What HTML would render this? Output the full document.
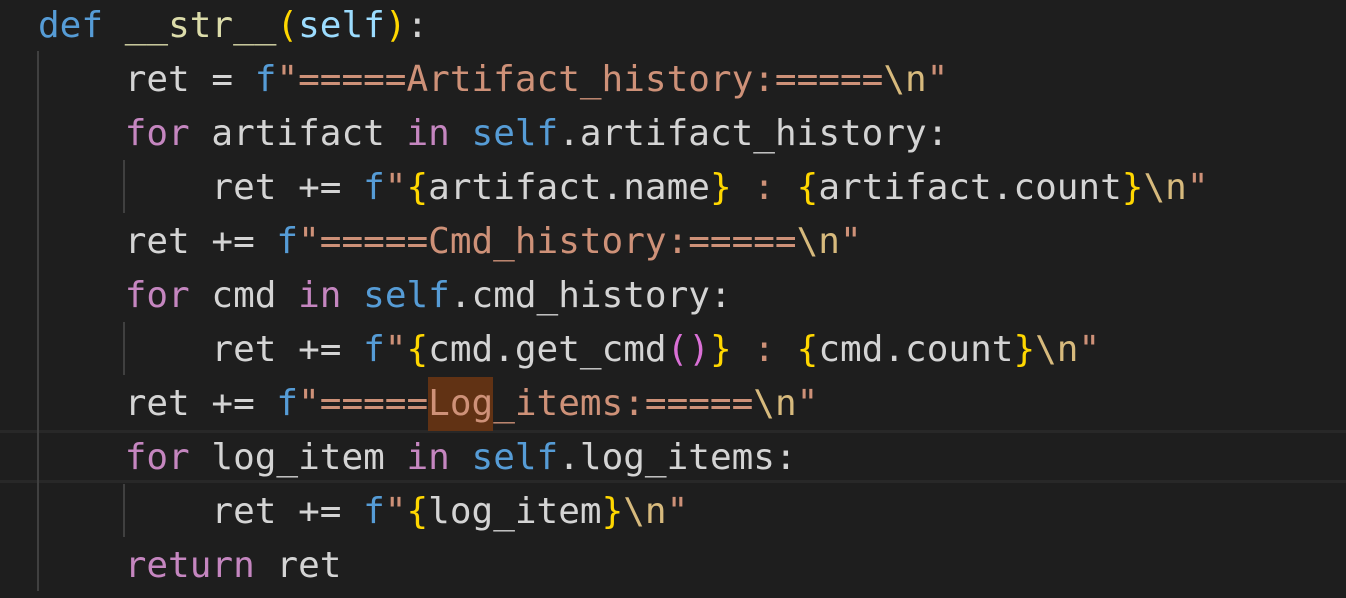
<!DOCTYPE html>
<html><head><style>
body{margin:0;width:1346px;height:598px;background:#1e1e1e;overflow:hidden;position:relative}
pre{margin:0;position:absolute;left:38px;top:-1px;font-family:"DejaVu Sans Mono","Liberation Mono",monospace;font-size:36px;line-height:54px;color:#d4d4d4;white-space:pre}
.k{color:#569cd6}.c{color:#c586c0}.fn{color:#dcdcaa}.p{color:#ffd700}.v{color:#9cdcfe}.s{color:#ce9178}.e{color:#d7ba7d}.m{color:#da70d6}
.hl{background:#613214;padding:6px 0 7px}
.g{position:absolute;width:2px;background:#404040}
.cl{position:absolute;left:0;width:1346px;height:3px;background:#282828}
</style></head><body>
<div class="cl" style="top:430px"></div>
<div class="cl" style="top:480px"></div>
<div class="g" style="left:37px;top:51px;height:540px"></div>
<div class="g" style="left:123px;top:160px;height:53px"></div>
<div class="g" style="left:123px;top:322px;height:53px"></div>
<div class="g" style="left:123px;top:484px;height:53px"></div>
<pre><span class="k">def</span> <span class="fn">__str__</span><span class="p">(</span><span class="v">self</span><span class="p">)</span>:
    ret = <span class="k">f</span><span class="s">"=====Artifact_history:=====</span><span class="e">\n</span><span class="s">"</span>
    <span class="c">for</span> artifact <span class="c">in</span> <span class="k">self</span>.artifact_history:
        ret += <span class="k">f</span><span class="s">"</span><span class="p">{</span>artifact.name<span class="p">}</span><span class="s"> : </span><span class="p">{</span>artifact.count<span class="p">}</span><span class="e">\n</span><span class="s">"</span>
    ret += <span class="k">f</span><span class="s">"=====Cmd_history:=====</span><span class="e">\n</span><span class="s">"</span>
    <span class="c">for</span> cmd <span class="c">in</span> <span class="k">self</span>.cmd_history:
        ret += <span class="k">f</span><span class="s">"</span><span class="p">{</span>cmd.get_cmd<span class="m">()</span><span class="p">}</span><span class="s"> : </span><span class="p">{</span>cmd.count<span class="p">}</span><span class="e">\n</span><span class="s">"</span>
    ret += <span class="k">f</span><span class="s">"=====<span class="hl">Log</span>_items:=====</span><span class="e">\n</span><span class="s">"</span>
    <span class="c">for</span> log_item <span class="c">in</span> <span class="k">self</span>.log_items:
        ret += <span class="k">f</span><span class="s">"</span><span class="p">{</span>log_item<span class="p">}</span><span class="e">\n</span><span class="s">"</span>
    <span class="c">return</span> ret</pre>
</body></html>
